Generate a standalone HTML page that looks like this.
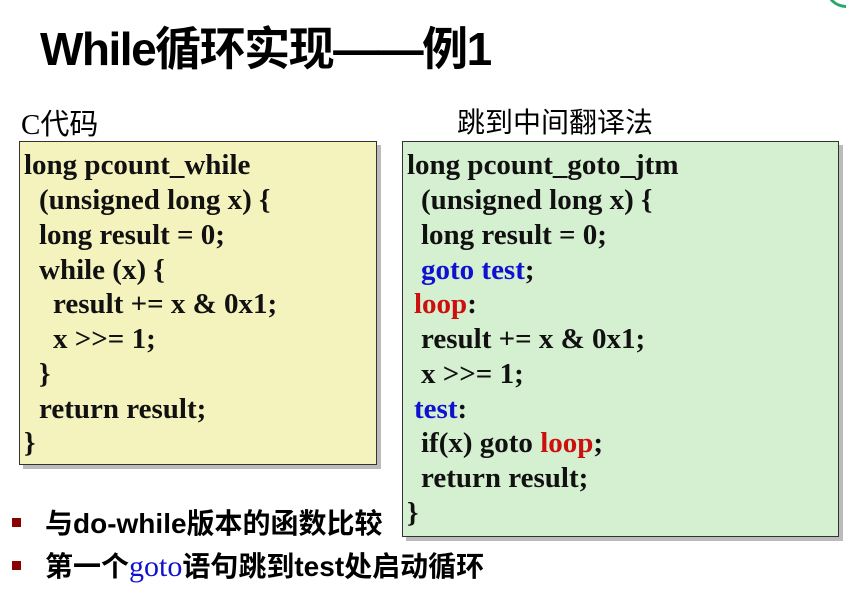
<!DOCTYPE html>
<html><head><meta charset="utf-8"><style>
body{margin:0;width:846px;height:604px;background:#fff;position:relative;overflow:hidden;font-family:"Liberation Sans","Noto Sans CJK SC",sans-serif}
.t{position:absolute;left:40px;top:13px;font-size:46px;font-weight:bold;letter-spacing:-1.5px;white-space:nowrap;color:#000}
.lab{position:absolute;font-family:"Liberation Serif","Noto Sans CJK SC",serif;font-size:29px;white-space:nowrap}
.box{position:absolute;border:1px solid #333;box-shadow:4px 4px 0 #bbb;box-sizing:border-box}
.code div{position:absolute;font-family:"Liberation Serif",serif;font-weight:bold;font-size:29px;white-space:nowrap;line-height:30px;color:#111}
.b{color:#1010d0}.r{color:#cc1010}
.bl{position:absolute;left:45px;font-size:28px;font-weight:bold;white-space:nowrap;letter-spacing:0;font-family:"Liberation Sans","Noto Sans CJK SC",sans-serif}
.sq{position:absolute;left:12px;width:9px;height:9px;background:#8b0000}
</style></head><body>
<div style="position:absolute;left:826px;top:-30px;width:40px;height:38px;border-radius:50%;border:3px solid #2aa86a;box-sizing:border-box"></div>
<div class="t">While循环实现——例1</div>
<div class="lab" style="left:21px;top:101px">C代码</div>
<div class="lab" style="left:457px;top:101px;font-family:'Noto Sans CJK SC',sans-serif;font-size:28px">跳到中间翻译法</div>
<div class="box" style="left:19px;top:141px;width:358px;height:324px;background:#f5f3bd"></div>
<div class="box" style="left:402px;top:141px;width:437px;height:396px;background:#d5f0d0"></div>
<div class="code">
<div style="left:24px;top:150px">long pcount_while</div>
<div style="left:39px;top:185px">(unsigned long x) {</div>
<div style="left:39px;top:220px">long result = 0;</div>
<div style="left:39px;top:255px">while (x) {</div>
<div style="left:53px;top:289px">result += x &amp; 0x1;</div>
<div style="left:53px;top:324px">x &gt;&gt;= 1;</div>
<div style="left:39px;top:359px">}</div>
<div style="left:39px;top:394px">return result;</div>
<div style="left:24px;top:428px">}</div>

<div style="left:407px;top:150px">long pcount_goto_jtm</div>
<div style="left:421px;top:185px">(unsigned long x) {</div>
<div style="left:421px;top:220px">long result = 0;</div>
<div style="left:421px;top:255px"><span class="b">goto test</span>;</div>
<div style="left:414px;top:289px"><span class="r">loop</span>:</div>
<div style="left:421px;top:324px">result += x &amp; 0x1;</div>
<div style="left:421px;top:359px">x &gt;&gt;= 1;</div>
<div style="left:414px;top:394px"><span class="b">test</span>:</div>
<div style="left:421px;top:428px">if(x) goto <span class="r">loop</span>;</div>
<div style="left:421px;top:463px">return result;</div>
<div style="left:407px;top:498px">}</div>
</div>
<div class="sq" style="top:518px"></div>
<div class="bl" style="top:502px">与do-while版本的函数比较</div>
<div class="sq" style="top:561px"></div>
<div class="bl" style="top:545px">第一个<span style="color:#1010d0;font-family:'Liberation Serif',serif;font-weight:normal;font-size:30px">goto</span>语句跳到test处启动循环</div>
</body></html>
